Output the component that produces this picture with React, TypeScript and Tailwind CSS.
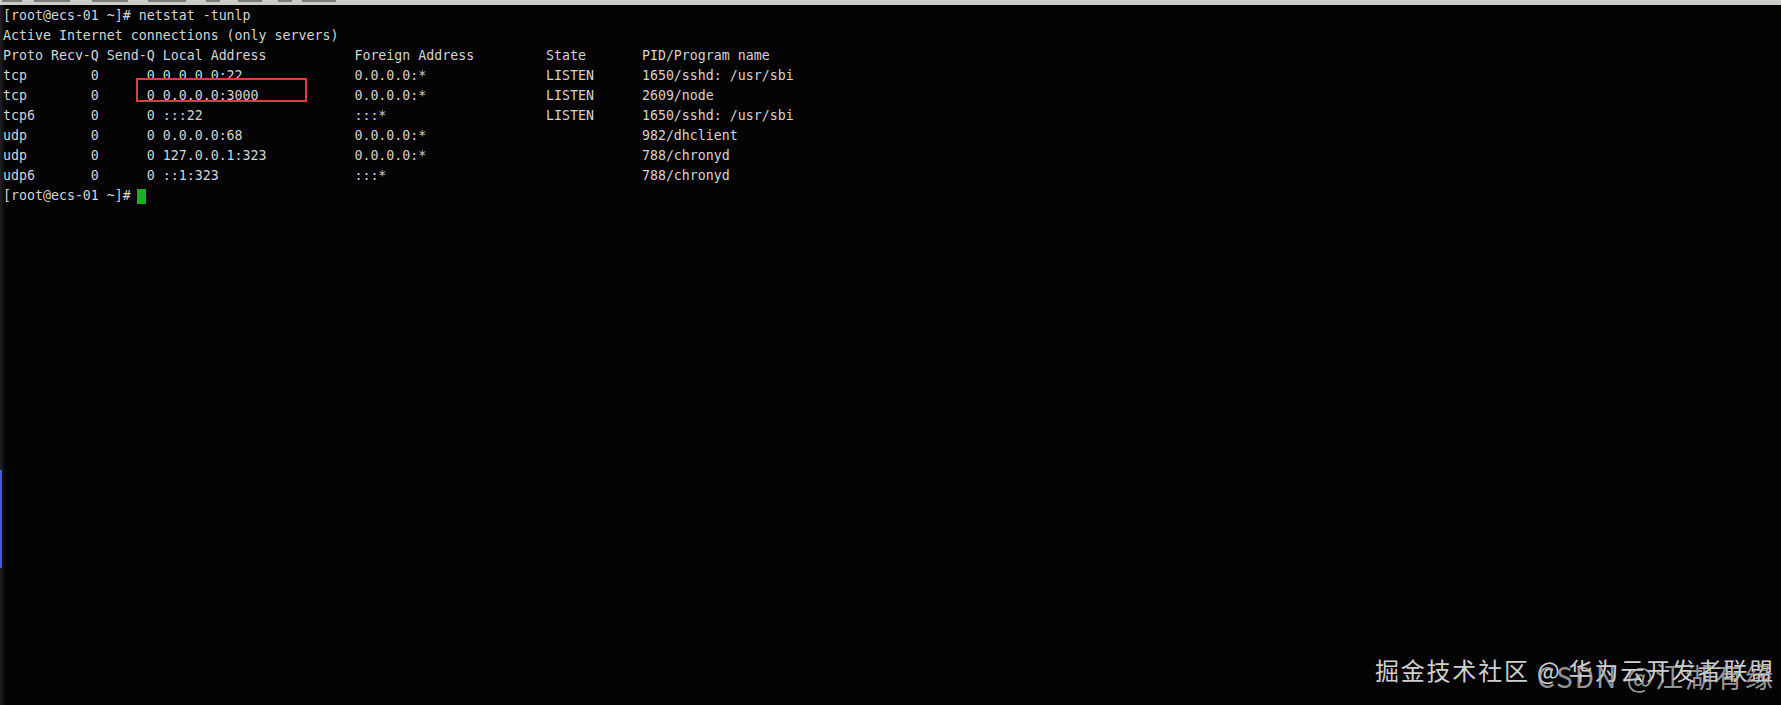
const col = (s: string, n: number) => s.padEnd(n, " ");
const right = (s: string, n: number) => s.padStart(n, " ");

type Conn = [string, string, string, string, string, string, string];

const conns: Conn[] = [
  ["tcp", "0", "0", "0.0.0.0:22", "0.0.0.0:*", "LISTEN", "1650/sshd: /usr/sbi"],
  ["tcp", "0", "0", "0.0.0.0:3000", "0.0.0.0:*", "LISTEN", "2609/node"],
  ["tcp6", "0", "0", ":::22", ":::*", "LISTEN", "1650/sshd: /usr/sbi"],
  ["udp", "0", "0", "0.0.0.0:68", "0.0.0.0:*", "", "982/dhclient"],
  ["udp", "0", "0", "127.0.0.1:323", "0.0.0.0:*", "", "788/chronyd"],
  ["udp6", "0", "0", "::1:323", ":::*", "", "788/chronyd"],
];

const row = (c: Conn) =>
  `${col(c[0], 5)} ${right(c[1], 6)} ${right(c[2], 6)} ${col(c[3], 23)} ${col(c[4], 23)} ${col(c[5], 11)} ${c[6]}`;

const lines = [
  "[root@ecs-01 ~]# netstat -tunlp",
  "Active Internet connections (only servers)",
  "Proto Recv-Q Send-Q Local Address           Foreign Address         State       PID/Program name",
  ...conns.map(row),
];

// faint tab labels cut off at the very top
const tabMarks = [
  [2, 22], [34, 70], [92, 128], [148, 186], [206, 220], [238, 262], [278, 292], [302, 336],
];

export default function App() {
  return (
    <div className="relative w-full h-[705px] bg-[#030303] overflow-hidden flex flex-col">
      <div className="relative h-[5px] shrink-0 bg-[#c9ccc7]">
        {tabMarks.map(([a, b]) => (
          <span
            key={a}
            className="absolute top-0 h-[2px] bg-[#7a7c78]"
            style={{ left: a, width: b - a }}
          />
        ))}
      </div>

      <div className="flex flex-1">
        <div className="w-[6px] shrink-0 bg-gradient-to-r from-[#222] to-[#030303]" />
        <pre className="-ml-[3px] pt-[1px] font-['DejaVu_Sans_Mono','Liberation_Mono',monospace] text-[13.28px] leading-[20.05px] text-[#d4d4d4] whitespace-pre">
          {lines.map((l) => (
            <div key={l}>{l}</div>
          ))}
          <div className="flex items-center">
            <span>{"[root@ecs-01 ~]# "}</span>
            <span className="inline-block w-[9px] h-[15px] bg-[#18b21c] -ml-[2px]" />
          </div>
        </pre>
      </div>

      {/* annotation box */}
      <div className="absolute left-[136px] top-[78px] w-[171px] h-[24px] border-2 border-[#de3b3b]" />

      {/* left edge highlight */}
      <div className="absolute left-0 top-[470px] w-[2px] h-[98px] bg-[#3c5ed4]" />

      {/* stacked watermarks */}
      <div className="absolute right-[6px] top-[655px] font-['Noto_Sans_CJK_SC',sans-serif] text-[24px] leading-[30px] text-[#cfcfcf] tracking-[1.8px]">
        掘金技术社区 @ 华为云开发者联盟
      </div>
      <div className="absolute right-[6px] top-[660px] font-['Noto_Sans_CJK_SC',sans-serif] text-[28px] leading-[32px] text-[#bdbdbd]/80 tracking-[2px]">
        CSDN @江湖有缘
      </div>
    </div>
  );
}
